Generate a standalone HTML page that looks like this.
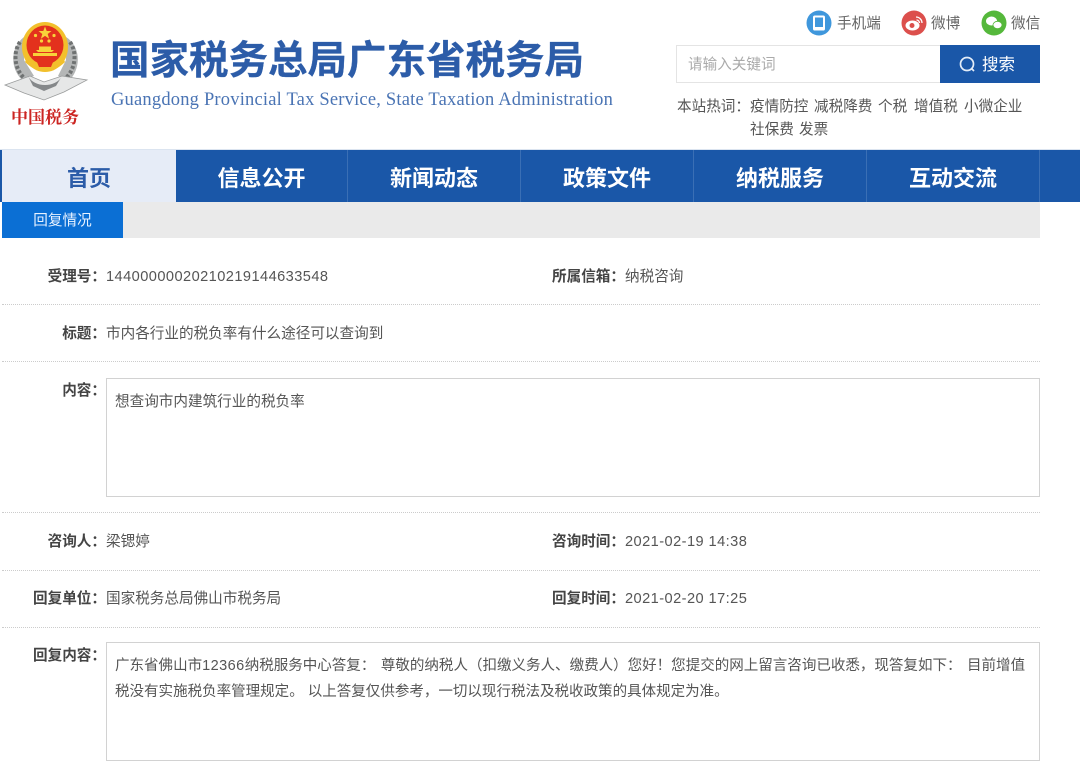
<!DOCTYPE html>
<html lang="zh-CN">
<head>
<meta charset="utf-8">
<title>国家税务总局广东省税务局</title>
<style>
html,body{margin:0;padding:0;background:#fff;}
body{width:1080px;height:774px;position:relative;overflow:hidden;font-family:"Liberation Sans","Noto Sans CJK SC",sans-serif;color:#555;font-size:14.6px;}
.a{position:absolute;white-space:nowrap;}
.title{left:110px;top:33px;font-size:39.5px;line-height:56px;font-weight:700;color:#2c5ca8;-webkit-text-stroke:.3px #2c5ca8;}
.en{left:111px;top:89px;font-family:"Liberation Serif","Noto Serif CJK SC",serif;font-size:18.5px;line-height:22px;color:#4a74b4;letter-spacing:.2px;}
.top{font-size:14.6px;line-height:20px;color:#666;top:14px;}
.search{left:676px;top:45px;width:265px;height:38px;box-sizing:border-box;border:1px solid #e4e4e4;background:#fff;}
.ph{left:688px;top:55px;font-size:14.6px;line-height:20px;color:#aaa;}
.btn{left:940px;top:45px;width:100px;height:38px;background:#1a57a8;}
.btntx{left:982px;top:54px;font-size:16.5px;line-height:22px;color:#fff;}
.hot{font-size:14.6px;line-height:20px;color:#555;}
.nav{left:0;top:150px;width:1080px;height:52px;background:#1a57a8;box-shadow:0 -1px 0 #dbe4f0;}
.cell{position:absolute;top:0;height:52px;line-height:57px;text-align:center;color:#fff;font-size:22px;font-weight:700;box-sizing:border-box;border-right:1px solid #3a6fb5;}
.cell.on{background:#e6ecf7;color:#2c5ca8;border-right:0;}
.tab{left:2px;top:202px;width:121px;height:36px;line-height:38px;text-align:center;background:#0b6fd4;color:#e8f2ff;font-size:14.6px;}
.bar{left:123px;top:202px;width:917px;height:36px;background:#eaeaea;}
.lb{font-weight:700;color:#444;font-size:14.6px;line-height:20px;text-align:right;}
.v{font-size:14.6px;line-height:20px;color:#555;}
.n{letter-spacing:.44px;}
.line{left:2px;width:1038px;height:0;border-top:1px dotted #ccc;}
.box{left:106px;width:934px;box-sizing:border-box;border:1px solid #d2d2d2;background:#fff;}
.tx{font-size:14.52px;line-height:26px;color:#555;}
.w{word-spacing:1.5px;}
</style>
</head>
<body>

<svg class="a" style="left:0;top:0" width="95" height="104" viewBox="0 0 95 104">
  <path d="M24 37 C10 48 10 68 22 80 L34 76 L24 60Z M66 37 C80 46 82 66 70 80 L58 76 L66 60Z" fill="#b4b6b6"/>
  <path d="M20 42 C13 52 14 68 24 78 M70 42 C77 52 76 68 66 78" fill="none" stroke="#6f7272" stroke-width="4" stroke-dasharray="3 2"/>
  <path d="M5 85 L30 76 L44 82 L62 76 L87 80 L64 92 L44 100 L24 93 Z" fill="#e6e7e7" stroke="#9a9c9c" stroke-width=".8"/>
  <path d="M28 76 C34 88 56 88 62 76 L56 86 L44 91 L33 86 Z" fill="#85888a"/>
  <ellipse cx="45" cy="47" rx="23" ry="25" fill="#f2c02c"/>
  <ellipse cx="45" cy="45" rx="18.500" ry="19.500" fill="#e3311d"/>
  <path d="M45 26.500 l1.700 4.500 4.800 0 -3.800 3 1.400 4.700 -4.100 -2.800 -4.100 2.800 1.400 -4.700 -3.800 -3 4.800 0z" fill="#f8d23a"/>
  <circle cx="35.500" cy="35.500" r="1.600" fill="#f8d23a"/><circle cx="41.500" cy="41" r="1.600" fill="#f8d23a"/><circle cx="49" cy="41" r="1.600" fill="#f8d23a"/><circle cx="54" cy="35.500" r="1.600" fill="#f8d23a"/>
  <path d="M38 52 h14 l2 -2 h-3 v-3.500 h-12 v3.500 h-3z M33 53 h24 v3 h-24z" fill="#f8d23a"/>
  <path d="M27 58 q8 7 18 7 q10 0 18 -7 l2 4 q-9 9 -20 9 q-11 0 -20 -9z" fill="#f2c02c"/>
  <path d="M37 62 h16 l-2 5 h-12z" fill="#e3311d"/>
</svg>
<div class="a" style="left:11px;top:102px;font-family:'Noto Serif CJK SC',serif;font-weight:700;font-size:17px;line-height:28px;color:#cc2522;">中国税务</div>

<div class="a title">国家税务总局广东省税务局</div>
<div class="a en">Guangdong Provincial Tax Service, State Taxation Administration</div>

<svg class="a" style="left:806px;top:10px" width="26" height="26" viewBox="0 0 26 26">
  <circle cx="13" cy="13" r="12.500" fill="#3f97dc"/>
  <rect x="7" y="5.500" width="12" height="15" rx="1.800" fill="#fff"/>
  <rect x="9" y="7.500" width="8" height="9.500" fill="#3f97dc"/>
</svg>
<div class="a top" style="left:837px">手机端</div>
<svg class="a" style="left:901px;top:10px" width="26" height="26" viewBox="0 0 26 26">
  <circle cx="13" cy="13" r="12.500" fill="#dc4f4c"/>
  <ellipse cx="11.500" cy="15.500" rx="7" ry="5" fill="#fff"/>
  <circle cx="11" cy="15.500" r="2.500" fill="#dc4f4c"/>
  <path d="M15 7 a6 6 0 0 1 6 6 M15.500 10 a3 3 0 0 1 3 3" fill="none" stroke="#fff" stroke-width="1.300"/>
</svg>
<div class="a top" style="left:931px">微博</div>
<svg class="a" style="left:981px;top:10px" width="26" height="26" viewBox="0 0 26 26">
  <circle cx="13" cy="13" r="12.500" fill="#55b83b"/>
  <ellipse cx="10.500" cy="11" rx="5.500" ry="4.500" fill="#fff"/>
  <ellipse cx="16.500" cy="15" rx="4.500" ry="3.700" fill="#fff" stroke="#55b83b" stroke-width=".8"/>
</svg>
<div class="a top" style="left:1011px">微信</div>

<div class="a search"></div>
<div class="a ph">请输入关键词</div>
<div class="a btn"></div>
<svg class="a" style="left:958px;top:55px" width="19" height="19" viewBox="0 0 19 19">
  <circle cx="9" cy="9" r="6.500" fill="none" stroke="#e4edf8" stroke-width="1.700"/>
  <path d="M13.500 13.500 L16 16" stroke="#e4edf8" stroke-width="1.700"/>
</svg>
<div class="a btntx">搜索</div>

<div class="a hot" style="left:677px;top:97px">本站热词：</div>
<div class="a hot" style="left:750px;top:97px">疫情防控</div>
<div class="a hot" style="left:814px;top:97px">减税降费</div>
<div class="a hot" style="left:878px;top:97px">个税</div>
<div class="a hot" style="left:914px;top:97px">增值税</div>
<div class="a hot" style="left:964px;top:97px">小微企业</div>
<div class="a hot" style="left:750px;top:120px">社保费</div>
<div class="a hot" style="left:799px;top:120px">发票</div>

<div class="a nav">
  <div class="cell on" style="left:2px;width:174px">首页</div>
  <div class="cell" style="left:176px;width:172px">信息公开</div>
  <div class="cell" style="left:348px;width:173px">新闻动态</div>
  <div class="cell" style="left:521px;width:173px">政策文件</div>
  <div class="cell" style="left:694px;width:173px">纳税服务</div>
  <div class="cell" style="left:867px;width:173px">互动交流</div>
</div>

<div class="a tab">回复情况</div>
<div class="a bar"></div>

<div class="a lb" style="left:0;width:106px;top:267px">受理号：</div>
<div class="a v n" style="left:106px;top:267px">14400000020210219144633548</div>
<div class="a lb" style="left:480px;width:145px;top:267px">所属信箱：</div>
<div class="a v" style="left:625px;top:267px">纳税咨询</div>
<div class="a line" style="top:304px"></div>

<div class="a lb" style="left:0;width:106px;top:324px">标题：</div>
<div class="a v" style="left:106px;top:324px">市内各行业的税负率有什么途径可以查询到</div>
<div class="a line" style="top:361px"></div>

<div class="a lb" style="left:0;width:106px;top:381px">内容：</div>
<div class="a box" style="top:378px;height:119px"></div>
<div class="a v" style="left:115px;top:392px">想查询市内建筑行业的税负率</div>
<div class="a line" style="top:512px"></div>

<div class="a lb" style="left:0;width:106px;top:532px">咨询人：</div>
<div class="a v" style="left:106px;top:532px">梁锶婷</div>
<div class="a lb" style="left:480px;width:145px;top:532px">咨询时间：</div>
<div class="a v n" style="left:625px;top:532px">2021-02-19 14:38</div>
<div class="a line" style="top:570px"></div>

<div class="a lb" style="left:0;width:106px;top:589px">回复单位：</div>
<div class="a v" style="left:106px;top:589px">国家税务总局佛山市税务局</div>
<div class="a lb" style="left:480px;width:145px;top:589px">回复时间：</div>
<div class="a v n" style="left:625px;top:589px">2021-02-20 17:25</div>
<div class="a line" style="top:627px"></div>

<div class="a lb" style="left:0;width:106px;top:646px">回复内容：</div>
<div class="a box" style="top:642px;height:119px"></div>
<div class="a tx" style="left:115px;top:653px"><span class="w">广东省佛山市<span class="n">12366</span>纳税服务中心答复： 尊敬的纳税人（扣缴义务人、缴费人）您好！您提交的网上留言咨询已收悉，现答复如下： 目前增值</span><br>税没有实施税负率管理规定。 以上答复仅供参考，一切以现行税法及税收政策的具体规定为准。</div>

</body>
</html>
